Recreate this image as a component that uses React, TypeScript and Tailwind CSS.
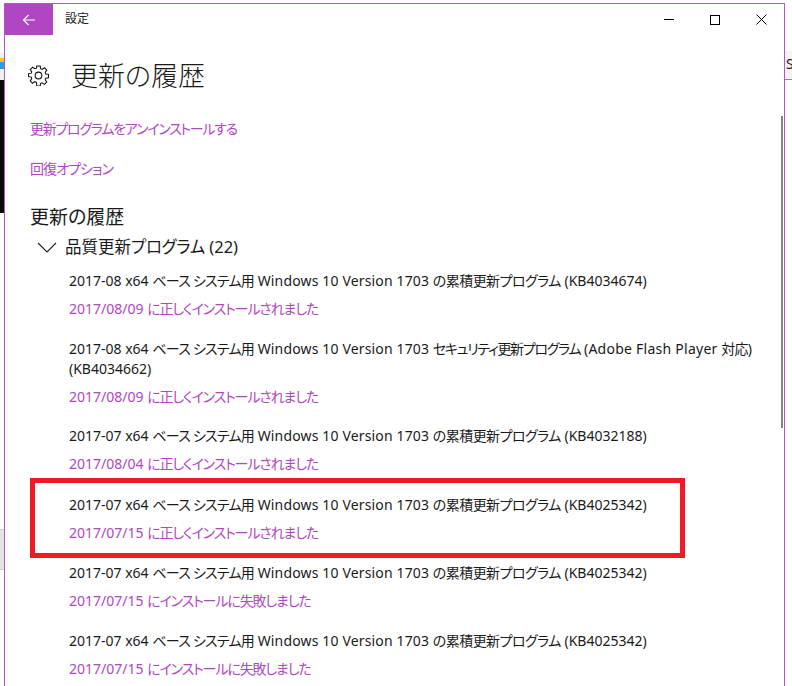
import React from "react";

const font = {
  fontFamily: '"Noto Sans", "Noto Sans CJK JP", sans-serif',
};

// Japanese runs sit tighter than the latin text around them
function J({ children, className = "tracking-[-0.75px]" }: { children: React.ReactNode; className?: string }) {
  return <span className={className}>{children}</span>;
}

function title(month: string, kb: string) {
  return (
    <>
      {month} x64 <J>ベース システム用</J> <span className="tracking-[0.15px]">Windows 10 Version 1703</span> <J className="tracking-[-0.55px]">の累積更新プログラム</J> ({kb})
    </>
  );
}

type Update = {
  title: React.ReactNode;
  date: string;
  status: string;
  top: string;
};

const updates: Update[] = [
  {
    title: title("2017-08", "KB4034674"),
    date: "2017/08/09",
    status: "に正しくインストールされました",
    top: "mt-0",
  },
  {
    title: (
      <>
        2017-08 x64 <J>ベース システム用</J> <span className="tracking-[0.15px]">Windows 10 Version 1703</span> <J className="tracking-[-1.3px]">セキュリティ更新プログラム</J> <span className="tracking-[0.25px]">(Adobe Flash Player</span> <J>対応</J>)
        <br />
        (KB4034662)
      </>
    ),
    date: "2017/08/09",
    status: "に正しくインストールされました",
    top: "mt-[20px]",
  },
  {
    title: title("2017-07", "KB4032188"),
    date: "2017/08/04",
    status: "に正しくインストールされました",
    top: "mt-[19px]",
  },
  {
    title: title("2017-07", "KB4025342"),
    date: "2017/07/15",
    status: "に正しくインストールされました",
    top: "mt-[21px]",
  },
  {
    title: title("2017-07", "KB4025342"),
    date: "2017/07/15",
    status: "にインストールに失敗しました",
    top: "mt-[20px]",
  },
  {
    title: title("2017-07", "KB4025342"),
    date: "2017/07/15",
    status: "にインストールに失敗しました",
    top: "mt-[20px]",
  },
];

function Gear() {
  return (
    <svg width="21" height="21" viewBox="0 0 20 20" fill="none" stroke="#111" strokeWidth="1">
      <circle cx="10" cy="10" r="3.2" />
      <path d="M8.4 1h3.2l.4 2.5 1.5.6 2.1-1.5 2.3 2.3-1.5 2.1.6 1.5 2.5.4v3.2l-2.5.4-.6 1.5 1.5 2.1-2.3 2.3-2.1-1.5-1.5.6-.4 2.5H8.4L8 16.5l-1.5-.6-2.1 1.5-2.3-2.3 1.5-2.1-.6-1.5-2.5-.4V8.4L3 8l.6-1.5-1.5-2.1 2.3-2.3 2.1 1.5L8 3z" />
    </svg>
  );
}

function App() {
  return (
    <div className="relative flex w-[792px] h-[686px] overflow-hidden bg-white [font-feature-settings:'palt']" style={font}>
      {/* desktop behind the window, left */}
      <div className="flex flex-col w-[4px] shrink-0">
        <div className="h-[53px]" />
        <div className="h-[27px] bg-[#f0f0f0] pt-[5px]">
          <div className="h-[4px] bg-[#f2c230]" />
          <div className="h-[7px] bg-[#2f9be0]" />
        </div>
        <div className="h-[133px] bg-[#0a0a0a]" />
        <div className="h-[316px]" />
        <div className="h-[41px] bg-[#e4e4e4] border-y border-[#cfcfcf]" />
      </div>

      {/* settings window */}
      <div className="relative flex flex-col w-[781px] h-[683px] mt-[3px] shrink-0 overflow-hidden border-x border-t border-[#b653c6] bg-white text-[#1a1a1a]">
        <div className="flex items-center h-[31px] shrink-0">
          <div className="flex items-center justify-center w-[48px] h-[31px] bg-[#b146c2]">
            <svg width="14" height="12" viewBox="0 0 14 12" fill="none" stroke="#fff" strokeWidth="1.1">
              <path d="M13 6H1.5M6.5 1 1.5 6l5 5" />
            </svg>
          </div>
          <span className="ml-[12px] mb-[2px] text-[12px] leading-none text-[#222]">設定</span>
          <div className="ml-auto flex items-center">
            <div className="flex items-center justify-center w-[46px] h-[31px]">
              <div className="w-[10px] h-px bg-black" />
            </div>
            <div className="flex items-center justify-center w-[46px] h-[31px]">
              <div className="w-[10px] h-[10px] border border-black" />
            </div>
            <div className="flex items-center justify-center w-[46px] h-[31px]">
              <svg width="11" height="11" viewBox="0 0 11 11" stroke="#000" strokeWidth="1">
                <path d="M.5.5l10 10M10.5.5l-10 10" />
              </svg>
            </div>
          </div>
        </div>

        <div className="flex items-center h-[40px] mt-[20px] pl-[23px] shrink-0">
          <Gear />
          <h1 className="ml-[22px] text-[27px] leading-none font-light text-[#1a1a1a]">更新の履歴</h1>
        </div>

        <a className="mt-[24px] ml-[25px] text-[14px] leading-[20px] text-[#b146c2] tracking-[-1.27px]">更新プログラムをアンインストールする</a>
        <a className="mt-[20px] ml-[25px] text-[14px] leading-[20px] text-[#b146c2] tracking-[-0.95px]">回復オプション</a>

        <h2 className="mt-[26px] ml-[25px] text-[19px] leading-[24px] font-normal text-[#1a1a1a]">更新の履歴</h2>
        <div className="flex items-center mt-[6px] ml-[32px] h-[24px]">
          <svg width="20" height="11" viewBox="0 0 20 11" fill="none" stroke="#222" strokeWidth="1.1">
            <path d="M1 1l9 9 9-9" />
          </svg>
          <span className="ml-[8px] text-[16.5px] leading-[24px]">品質更新<span className="tracking-[-0.3px]">プログラム</span> (22)</span>
        </div>

        <div className="flex flex-col mt-[12px] ml-[64px]">
          {updates.map((u, i) => (
            <div key={i} className={u.top}>
              <p className="text-[14px] leading-[20px]">{u.title}</p>
              <p className="mt-[8px] text-[14px] leading-[20px] text-[#b146c2]">
                {u.date} <span className="tracking-[-1.15px]">{u.status}</span>
              </p>
            </div>
          ))}
        </div>

        {/* scrollbar */}
        <div className="absolute right-[1px] top-[112px] w-[2px] h-[312px] bg-[#858585]" />
        {/* highlight drawn over the screenshot */}
        <div className="absolute left-[25px] top-[474px] w-[655px] h-[80px] border-[5px] border-[#ed1c24]" />
      </div>

      {/* desktop behind the window, right */}
      <div className="flex flex-col w-[7px] shrink-0">
        <div className="h-[51px]" />
        <div className="h-[29px] bg-[#f3f3f3] border-b border-[#8a8a8a] pl-[1px] text-[14px] leading-[26px] text-[#222] overflow-hidden">S</div>
      </div>
    </div>
  );
}

export default App;
